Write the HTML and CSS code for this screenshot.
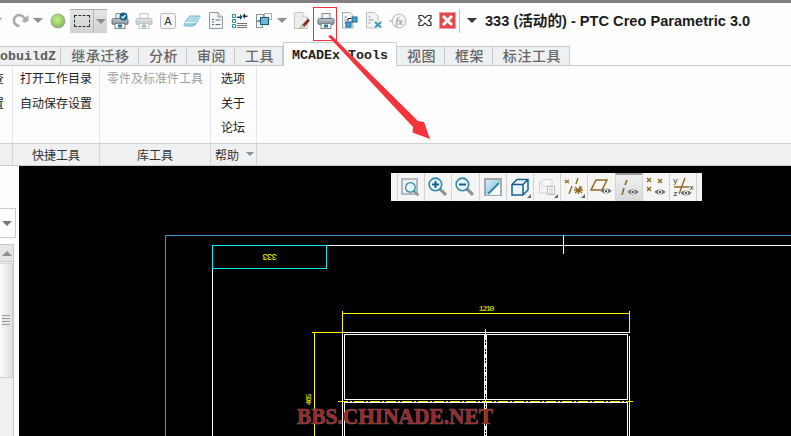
FILE: index.html
```html
<!doctype html>
<html>
<head>
    <meta http-equiv="content-type" content="text/html;charset=utf-8">
    <title>PTC Creo Parametric 3.0</title>
    <link rel="stylesheet" href="styles.css">
</head>
<body>
    <!-- общие значки -->
    <svg class="defs" width="0" height="0">
        <defs>
            <linearGradient id="gBody" x1="0" y1="0" x2="0" y2="1">
                <stop offset="0" stop-color="#c4ccd2"/>
                <stop offset="1" stop-color="#7d8890"/>
            </linearGradient>
            <linearGradient id="gBlue" x1="0" y1="0" x2="1" y2="1">
                <stop offset="0" stop-color="#d9f0f7"/>
                <stop offset="1" stop-color="#6fb9d6"/>
            </linearGradient>
            <radialGradient id="gBall" cx=".45" cy=".4" r=".6">
                <stop offset="0" stop-color="#c6ee9a"/>
                <stop offset=".7" stop-color="#93cf5e"/>
                <stop offset="1" stop-color="#8f9a88"/>
            </radialGradient>
            <symbol id="printer" viewBox="0 0 18 18">
                <rect x="5" y="1.5" width="8" height="5" fill="#f2f3f4" stroke="#858d94"/>
                <rect x="1" y="6.5" width="16" height="6" rx="1.5" fill="url(#gBody)" stroke="#69737b"/>
                <rect x="4" y="11.5" width="10" height="5" fill="#f6f7f8" stroke="#7c858c"/>
                <rect x="7" y="12.5" width="4" height="3" fill="#2a7ca8"/>
            </symbol>
            <symbol id="eye" viewBox="0 0 12 8">
                <path d="M.5 4C3 .8 9 .8 11.500 4C9 7.200 3 7.200 .5 4Z" fill="#777"/>
                <circle cx="6" cy="4" r="2" fill="#fff"/>
                <circle cx="6" cy="4" r="1" fill="#222"/>
            </symbol>
            <symbol id="glass" viewBox="0 0 20 20">
                <path d="M12 12L18 18" stroke="#8d9296" stroke-width="3"/>
                <circle cx="8" cy="8" r="6" fill="#e6f4f9" stroke="#2f86a8" stroke-width="1.500"/>
            </symbol>
        </defs>
    </svg>

    <div class="top-line"></div>

    <div class="qat">
        <span class="qa tri w8"><i class="arrow off-left"></i></span>
        <span class="qa">
            <svg width="17" height="15" viewBox="0 0 17 15"><path d="M12.500 9.500A5.500 5.500 0 1 0 7.500 13" fill="none" stroke="#a8aaab" stroke-width="2.600"/><path d="M9.500 8.500H16.500V2Z" fill="#a8aaab"/></svg>
        </span>
        <span class="qa tri"><i class="arrow"></i></span>
        <span class="qa ml2">
            <svg width="16" height="16" viewBox="0 0 16 16"><circle cx="8" cy="8" r="7" fill="url(#gBall)" stroke="#a3a8a0"/></svg>
        </span>
        <span class="sel-btn">
            <span class="sel-main"><i class="dash-box"></i></span>
            <span class="sel-drop"><i class="arrow"></i></span>
        </span>
        <span class="qa ml1">
            <svg width="18" height="18" viewBox="0 0 18 18"><use href="#printer"/><circle cx="12.500" cy="4.500" r="4" fill="#14618f"/><path d="M10.500 4.500L12 6L14.500 3" fill="none" stroke="#fff" stroke-width="1.200"/></svg>
        </span>
        <span class="qa"><svg class="faded" width="18" height="18"><use href="#printer"/></svg></span>
        <span class="qa">
            <svg width="16" height="16" viewBox="0 0 16 16"><rect x=".5" y=".5" width="15" height="15" rx="2" fill="#f3f5f7" stroke="#b3bcc4"/><text x="8" y="12" class="ico-a">A</text></svg>
        </span>
        <span class="qa">
            <svg width="18" height="14" viewBox="0 0 18 14"><path d="M1 10L6 2.500Q6.500 2 7.500 2H16.500Q17.500 2 17 3L13 9.500Q12 12 10 12H3Q.5 12 1 10Z" fill="url(#gBlue)" stroke="#74b5d0"/><path d="M1.500 8.500H12L16.500 3" fill="none" stroke="#eaf6fa"/></svg>
        </span>
        <span class="qa">
            <svg width="14" height="17" viewBox="0 0 14 17"><path d="M.5 .5H9L13.500 5V16.500H.5Z" fill="#f6f7f8" stroke="#8e979e"/><path d="M9 .5V5H13.500" fill="#dfe3e6" stroke="#8e979e"/><path d="M3 7.500h2M3 10h2M3 12.500h2" stroke="#4e6f80"/><path d="M6.500 8h5M6.500 12.500h5" stroke="#666f76"/></svg>
        </span>
        <span class="qa">
            <svg width="16" height="16" viewBox="0 0 16 16"><path d="M.5 1.500h3v3h-3zM.5 6.500h3v3h-3zM.5 11.500h3v3h-3z" fill="#fff" stroke="#2b87b5"/><path d="M5 10.500H15M5 12.500H15M5 14.500H15" stroke="#687279"/><path d="M5 3.500H8V1L10.500 4L8 7V5H5Z" fill="#0f4f70"/><path d="M15.500 3.500H13V1L10.500 4L13 7V5H15.500Z" fill="#22323c" transform="translate(0 -1)"/></svg>
        </span>
        <span class="qa">
            <svg width="16" height="16" viewBox="0 0 16 16"><rect x=".5" y="1.500" width="7" height="6" fill="#f4f5f6" stroke="#8a9298"/><rect x="8.500" y=".5" width="7" height="6" fill="#f4f5f6" stroke="#a8aeb3"/><rect x=".5" y="8.500" width="6" height="6" fill="#f4f5f6" stroke="#8a9298"/><rect x="4.500" y="4.500" width="8" height="7" fill="#70b7d6" stroke="#15587a"/></svg>
        </span>
        <span class="qa tri"><i class="arrow"></i></span>
        <span class="qa ml2">
            <svg width="17" height="18" viewBox="0 0 17 18"><path d="M.5 .5H9L13.500 5V16.500H.5Z" fill="#eceded" stroke="#c3c6c8"/><path d="M9 .5V5H13.500" fill="#fff" stroke="#c3c6c8"/><path d="M8 13L14 6.500L16 8.500L10.500 15Z" fill="#8e2f22"/><path d="M5 17L8 12.500L10.500 15Z" fill="#d9d2b4" stroke="#a89e78" stroke-width=".5"/></svg>
        </span>
        <span class="qa"><svg width="18" height="18"><use href="#printer"/></svg></span>
        <span class="qa">
            <svg width="17" height="17" viewBox="0 0 17 17"><path d="M.5 .5H8L11 3.500V16H.5Z" fill="#f3f4f5" stroke="#a5acb2"/><path d="M2.500 5h2M2.500 8h2M2.500 11h2" stroke="#5f7c8d"/><rect x="10" y="5" width="5" height="5" fill="#4aa3cc" stroke="#14618f"/><rect x="4" y="10" width="5" height="5" fill="#4aa3cc" stroke="#14618f"/><path d="M6 9V6.500H9" fill="none" stroke="#222"/></svg>
        </span>
        <span class="qa">
            <svg width="17" height="17" viewBox="0 0 17 17"><path d="M.5 .5H8L12 4V16H.5Z" fill="#f3f4f5" stroke="#b9bec2"/><path d="M2.500 5h2M2.500 8h5M2.500 11h2" stroke="#8a9aa4"/><rect x="8" y="9" width="8" height="7" fill="#e9f4f8"/><path d="M9 10L15 15.500M15 10L9 15.500" stroke="#3a96c0" stroke-width="2"/></svg>
        </span>
        <span class="qa">
            <svg width="18" height="16" viewBox="0 0 18 16"><path d="M0 8H3" stroke="#aaa"/><circle cx="10" cy="8" r="7" fill="#f4f4f4" stroke="#b5b8ba"/><text x="10" y="11.500" class="ico-fx">fx</text></svg>
        </span>
        <span class="qa ml3">
            <svg width="14" height="13" viewBox="0 0 14 13"><path d="M1 1.500H4.500L7 4L9.500 1.500H13V4.500L10.500 6.500L13 8.500V11.500H9.500L7 9L4.500 11.500H1V8.500L3.500 6.500L1 4.500Z" fill="#fff" stroke="#333" stroke-width="1.200"/></svg>
        </span>
        <span class="qa w20">
            <svg width="17" height="17" viewBox="0 0 17 17"><rect width="17" height="17" fill="#e5474a"/><rect x=".5" y=".5" width="16" height="16" fill="none" stroke="#f29a9b"/><path d="M4 4L13 13M13 4L4 13" stroke="#fff" stroke-width="3"/></svg>
        </span>
        <span class="qat-sep"></span>
        <span class="qa tri title-tri"><i class="arrow dark"></i></span>
        <span class="title">333 (活动的) - PTC Creo Parametric 3.0</span>
    </div>

    <div class="tabs">
        <div class="tab clip w61">obuildZ</div>
        <div class="tab zh w78">继承迁移</div>
        <div class="tab zh w48">分析</div>
        <div class="tab zh w48">审阅</div>
        <div class="tab zh w48">工具</div>
        <div class="tab active w114">MCADEx Tools</div>
        <div class="tab zh w48">视图</div>
        <div class="tab zh w48">框架</div>
        <div class="tab zh w77">标注工具</div>
    </div>

    <div class="ribbon">
        <div class="group g-first">
            <div class="group-body cut">
                <div class="item">检查</div>
                <div class="item">设置</div>
            </div>
            <div class="group-label"></div>
        </div>
        <div class="group g-quick">
            <div class="group-body">
                <div class="item">打开工作目录</div>
                <div class="item">自动保存设置</div>
            </div>
            <div class="group-label">快捷工具</div>
        </div>
        <div class="group g-lib">
            <div class="group-body">
                <div class="item off">零件及标准件工具</div>
            </div>
            <div class="group-label">库工具</div>
        </div>
        <div class="group g-help">
            <div class="group-body">
                <div class="item">选项</div>
                <div class="item">关于</div>
                <div class="item">论坛</div>
            </div>
            <div class="group-label label-more">帮助<i class="arrow small"></i></div>
        </div>
        <div class="group g-rest">
            <div class="group-body"></div>
            <div class="group-label"></div>
        </div>
    </div>

    <div class="workspace">
        <div class="side">
            <div class="side-box"><i class="arrow"></i></div>
            <div class="scroll">
                <div class="scroll-up"><i class="arrow up"></i></div>
                <div class="scroll-thumb"><i class="grip"></i></div>
            </div>
        </div>
        <div class="canvas">
            <svg class="drawing" width="772" height="270" viewBox="19 166 772 270">
                <path class="ln-blue" d="M791 235.500H165.500V436"/>
                <path class="ln-white" d="M791 245.500H326.500M212.500 268.500V436M563.500 235V254"/>
                <rect class="ln-cyan" x="212.500" y="245.500" width="114" height="23"/>
                <text class="dim dim-big" transform="rotate(180 270 257.500)" x="270" y="261">333</text>

                <path class="ln-yellow" d="M342.500 311V333M629.500 311V333M342.500 313.500H629.500M312 332.500H343M314.500 332.500V436"/>
                <text class="dim" x="486" y="311">1210</text>
                <text class="dim" transform="rotate(-90 311 400)" x="311" y="400">465</text>

                <path class="ln-white" d="M342.500 332.500H628.500M342.500 332.500V436M629.500 336V436"/>
                <path class="ln-white" d="M344.500 399.500V334.500H484.500V399.500ZM486.500 399.500V334.500H627.500V399.500Z"/>
                <path class="ln-white" d="M344.500 436V402.500H484.500V436M486.500 436V402.500H627.500V436"/>
                <path class="ln-yellow" d="M485.500 329V336"/>
                <path class="ln-center" d="M338 401.500H633"/>
                <path class="ln-center-v" d="M485.500 336V436"/>
                <path class="ln-center-w" d="M485.500 336V436"/>
                <text class="mark" x="395" y="424" textLength="196" lengthAdjust="spacingAndGlyphs">BBS.CHINADE.NET</text>
            </svg>

            <div class="float-bar">
                <div class="f-cell">
                    <svg width="22" height="22" viewBox="0 0 22 22"><rect x="2" y="3" width="15" height="15" fill="#eee" stroke="#b5b8ba" stroke-width="2"/><use href="#glass" x="4" y="5" width="16" height="16"/></svg>
                </div>
                <div class="f-cell">
                    <svg width="22" height="22" viewBox="0 0 22 22"><use href="#glass" width="21" height="21"/><path d="M5 8.500H12M8.500 5V12" stroke="#14618f" stroke-width="2"/></svg>
                </div>
                <div class="f-cell">
                    <svg width="22" height="22" viewBox="0 0 22 22"><use href="#glass" width="21" height="21"/><path d="M5 8.500H12" stroke="#14618f" stroke-width="2"/></svg>
                </div>
                <div class="f-cell">
                    <svg width="18" height="18" viewBox="0 0 18 18"><rect x="1" y="1" width="16" height="16" fill="url(#gBlue)" stroke="#a6a9ab" stroke-width="2"/><path d="M2 17L16 4V17Z" fill="#f4f8fa"/><path d="M4 16L15 5" stroke="#2f86a8" stroke-width="2"/></svg>
                </div>
                <div class="f-cell corner">
                    <svg width="18" height="18" viewBox="0 0 18 18"><path d="M1 6.500H12V17H1ZM1 6.500L6 1.500H17V12L12 17M12 6.500L17 1.500" fill="#eaf6fa" stroke="#14618f" stroke-width="1.500"/></svg>
                </div>
                <div class="f-cell corner">
                    <svg width="18" height="18" viewBox="0 0 18 18"><path d="M1.500 3.500H12V15H1.500Z" fill="#f2f2f2" stroke="#d5d6d7"/><path d="M4 1.500H14V8H4Z" fill="#f7f7f7" stroke="#d5d6d7"/><rect x="9.500" y="8.500" width="7" height="8" fill="#fff" stroke="#bbb"/><path d="M11 11h4M11 13h4M11 15h4" stroke="#bbb"/></svg>
                </div>
                <div class="f-cell corner">
                    <svg width="20" height="20" viewBox="0 0 20 20"><path d="M1 3L5 6M5 3L1 6M14 1L12 7M8 9L5 17M16 9L14 17M10 13H19M11 10L18 16M18 10L11 16" stroke="#8e6a24" stroke-width="1.400" fill="none"/></svg>
                </div>
                <div class="f-cell">
                    <svg width="22" height="20" viewBox="0 0 22 20"><path d="M6 3H17L12 13H1Z" fill="none" stroke="#8e6a24" stroke-width="1.500"/><use href="#eye" x="10" y="10" width="12" height="8"/></svg>
                </div>
                <div class="f-cell selected">
                    <svg width="20" height="20" viewBox="0 0 20 20"><path d="M8 2L6 7M5 10L3 17" stroke="#8e6a24" stroke-width="1.600"/><use href="#eye" x="8" y="10" width="12" height="8"/></svg>
                </div>
                <div class="f-cell">
                    <svg width="20" height="20" viewBox="0 0 20 20"><path d="M1 1L5 5M5 1L1 5M12 2L16 6M16 2L12 6M1 10L5 14M5 10L1 14" stroke="#8e6a24" stroke-width="1.400"/><use href="#eye" x="8" y="11" width="12" height="8"/></svg>
                </div>
                <div class="f-cell">
                    <svg width="22" height="22" viewBox="0 0 22 22"><path d="M13 2L7 18M2 11H17" stroke="#8e6a24" stroke-width="1.400"/><text x="1" y="7" class="ico-axis">y</text><text x="17" y="14" class="ico-axis">x</text><text x="1" y="20" class="ico-axis">z</text><use href="#eye" x="8" y="13" width="12" height="8"/></svg>
                </div>
            </div>
        </div>
    </div>

    <!-- выноска поверх всего -->
    <svg class="red-arrow" width="791" height="166" viewBox="0 0 791 166">
        <rect class="red-box" x="313.500" y="7.500" width="23" height="33"/>
        <path d="M328 36L331 35L418 121L424 122L430 139L412.500 132.500L413 127Z" fill="#f5333a"/>
    </svg>
</body>
</html>
```

FILE: styles.css
```css
html, body {
    margin: 0;
    height: 100%;
    overflow: hidden;
}

body {
    position: relative;
    width: 791px;
    height: 436px;
    background: #fdfdfd;
    color: #222;
    font-family: "Noto Sans CJK SC", "Liberation Sans", sans-serif;
    font-size: 12px;
}

.defs {
    position: absolute;
}

.top-line {
    height: 3px;
    background: #808080;
}

/* панель быстрого доступа */
.qat {
    display: flex;
    align-items: center;
    height: 35px;
    padding-bottom: 8px;
    background: #fdfdfd;
    overflow: hidden;
}

.qa {
    display: flex;
    flex: none;
    align-items: center;
    justify-content: center;
    width: 24px;
}

.qa.tri {
    width: 12px;
}

.qa.w8 {
    width: 8px;
}

.qa.w20 {
    width: 20px;
}

.ml1 {
    margin-left: 1px;
}

.ml2 {
    margin-left: 2px;
}

.ml3 {
    margin-left: 3px;
}

.faded {
    opacity: .45;
}

.arrow {
    display: block;
    width: 0;
    height: 0;
    border-top: 5px solid #8f8f8f;
    border-left: 5px solid transparent;
    border-right: 5px solid transparent;
}

.arrow.off-left {
    margin-left: -14px;
}

.arrow.dark {
    border-top-color: #333;
}

.arrow.small {
    margin-left: 7px;
    border-top-width: 4px;
    border-left-width: 4px;
    border-right-width: 4px;
}

.arrow.up {
    border-top: 0;
    border-bottom: 5px solid #8f8f8f;
}

.sel-btn {
    display: flex;
    flex: none;
    width: 37px;
    height: 24px;
    box-sizing: border-box;
    border-top: 1px solid #a9abad;
    background: linear-gradient(#e4e5e7, #cfd1d3);
}

.sel-main {
    display: flex;
    align-items: center;
    justify-content: center;
    width: 23px;
    border-right: 1px solid #b5b7b9;
}

.sel-drop {
    display: flex;
    flex: 1;
    align-items: center;
    justify-content: center;
}

.dash-box {
    display: block;
    width: 14px;
    height: 10px;
    border: 1px dashed #333;
}

.qat-sep {
    flex: none;
    width: 1px;
    height: 24px;
    margin: 0 6px 0 2px;
    background: #c4c6c8;
}

.title-tri {
    margin-right: 7px;
}

.title {
    flex: none;
    padding-bottom: 2px;
    color: #1c1c1c;
    font-family: "Liberation Sans", "Noto Sans CJK SC", sans-serif;
    font-size: 14.600px;
    font-weight: bold;
    white-space: nowrap;
}

.ico-a {
    fill: #333;
    font-family: "Liberation Sans", sans-serif;
    font-size: 11px;
    text-anchor: middle;
}

.ico-fx {
    fill: #888;
    font-family: "Liberation Serif", serif;
    font-size: 10px;
    font-style: italic;
    text-anchor: middle;
}

.ico-axis {
    fill: #222;
    font-family: "Liberation Mono", monospace;
    font-size: 8px;
}

/* вкладки */
.tabs {
    display: flex;
    height: 19px;
    border-bottom: 1px solid #c8c9cb;
}

.tab {
    flex: none;
    box-sizing: border-box;
    height: 19px;
    border-top: 1px solid #c8c9cb;
    border-right: 1px solid #c8c9cb;
    background: #eff0f2;
    color: #5c5c5c;
    font-family: "Liberation Mono", "Noto Sans CJK SC", monospace;
    font-size: 13.300px;
    font-weight: bold;
    line-height: 19px;
    text-align: center;
    white-space: nowrap;
}

.tab.zh {
    color: #666;
    font-family: "Noto Sans CJK SC", sans-serif;
    font-size: 14px;
    font-weight: 500;
    letter-spacing: .6px;
    line-height: 16px;
    text-indent: 2px;
}

.tab.clip {
    overflow: hidden;
    padding-right: 9px;
    text-align: right;
}

.tab.active {
    height: 24px;
    margin-top: -4px;
    border: 1px solid #c8c9cb;
    border-bottom: 0;
    border-radius: 2px 2px 0 0;
    background: #fdfdfd;
    color: #222;
    line-height: 25px;
    position: relative;
}

.w61 {
    width: 61px;
}

.w78 {
    width: 78px;
}

.w48 {
    width: 48px;
}

.w114 {
    width: 114px;
}

.w77 {
    width: 77px;
}

/* лента */
.ribbon {
    display: flex;
    height: 99px;
    border-bottom: 1px solid #c8c9cb;
    overflow: hidden;
}

.group {
    display: flex;
    flex: none;
    flex-direction: column;
}

.g-first {
    width: 13px;
}

.g-quick {
    width: 87px;
}

.g-lib {
    width: 111px;
}

.g-help {
    width: 46px;
}

.g-rest {
    flex: 1;
}

.group-body {
    flex: none;
    box-sizing: border-box;
    height: 77px;
    padding-left: 7px;
    border-right: 1px solid #e4e5e7;
}

.group-body.cut {
    padding-left: 0;
    margin-left: -20px;
    white-space: nowrap;
}

.g-help .group-body {
    padding-left: 10px;
}

.g-rest .group-body {
    border-right: 0;
}

.item {
    height: 24.500px;
    line-height: 24.500px;
}

.item.off {
    color: #a0a0a0;
}

.group-label {
    display: flex;
    align-items: center;
    justify-content: center;
    box-sizing: border-box;
    height: 22px;
    padding-bottom: 1px;
    border-top: 1px solid #cfd0d2;
    border-right: 1px solid #d4d5d7;
    background: #eff0f2;
    color: #333;
}

.label-more {
    justify-content: flex-start;
    padding-left: 4px;
}

.g-rest .group-label {
    border-right: 0;
}

/* рабочая область */
.workspace {
    display: flex;
    height: 270px;
}

.side {
    flex: none;
    width: 19px;
    padding-top: 42px;
    background: #fdfdfd;
}

.side-box {
    display: flex;
    align-items: center;
    justify-content: flex-end;
    box-sizing: border-box;
    width: 16px;
    height: 30px;
    padding-right: 3px;
    border: 1px solid #c8cacc;
    border-left: 0;
}

.side-box .arrow {
    border-top-color: #777;
}

.scroll {
    box-sizing: border-box;
    width: 14px;
    height: 192px;
    margin-top: 6px;
    border-right: 1px solid #c8cacc;
    background: #eff0f2;
}

.scroll-up {
    display: flex;
    align-items: center;
    justify-content: center;
    height: 16px;
    border-top: 1px solid #c8cacc;
    border-bottom: 1px solid #c8cacc;
    background: #e4e5e7;
}

.scroll-thumb {
    display: flex;
    align-items: center;
    justify-content: center;
    height: 113px;
    margin-top: 1px;
    border: 1px solid #d3d4d6;
    border-left: 0;
    background: linear-gradient(to right, #fbfbfb, #dedfe0);
}

.grip {
    display: block;
    width: 8px;
    height: 12px;
    background: repeating-linear-gradient(#9c9c9c 0 1px, #e8e8e8 1px 3px);
}

.canvas {
    flex: 1;
    position: relative;
    background: #000;
    overflow: hidden;
}

.drawing {
    display: block;
    fill: none;
    shape-rendering: crispEdges;
}

.ln-blue {
    stroke: #3f97d6;
}

.ln-white {
    stroke: #fff;
}

.ln-cyan {
    stroke: #00f0f0;
}

.ln-yellow {
    stroke: #ff0;
}

.ln-center {
    stroke: #ff0;
    stroke-dasharray: 10 2 2 2;
}

.ln-center-v {
    stroke: #ff0;
    stroke-dasharray: 4 2 1 2;
}

.ln-center-w {
    stroke: #fff;
    stroke-dasharray: 2 7;
}

.dim {
    fill: #ff0;
    font-family: "Liberation Mono", monospace;
    font-size: 8px;
    letter-spacing: -1.200px;
    text-anchor: middle;
}

.dim-big {
    font-size: 9px;
    letter-spacing: -.8px;
}

.mark {
    fill: #9c2628;
    stroke: #8a5050;
    stroke-width: .7px;
    font-family: "Liberation Serif", serif;
    font-size: 24px;
    font-weight: bold;
    text-anchor: middle;
    shape-rendering: auto;
}

/* плавающая панель */
.float-bar {
    position: absolute;
    top: 7px;
    left: 372px;
    display: flex;
    box-sizing: border-box;
    width: 311px;
    height: 28px;
    padding: 0 5px 0 6px;
    background: #f5f5f5;
}

.f-cell {
    display: flex;
    flex: 1;
    align-items: center;
    justify-content: center;
    position: relative;
    border-left: 1px solid #d2d3d5;
}

.f-cell:last-child {
    border-right: 1px solid #d2d3d5;
}

.f-cell.corner::after {
    content: "";
    position: absolute;
    right: 2px;
    bottom: 3px;
    border-bottom: 4px solid #666;
    border-left: 4px solid transparent;
}

.f-cell.selected {
    border-top: 2px solid #9a9c9e;
    background: linear-gradient(#f0f0f0, #d8d9da);
}

/* красная выноска */
.red-arrow {
    position: absolute;
    top: 0;
    left: 0;
}

.red-box {
    fill: none;
    stroke: #f0333a;
    shape-rendering: crispEdges;
}
```
